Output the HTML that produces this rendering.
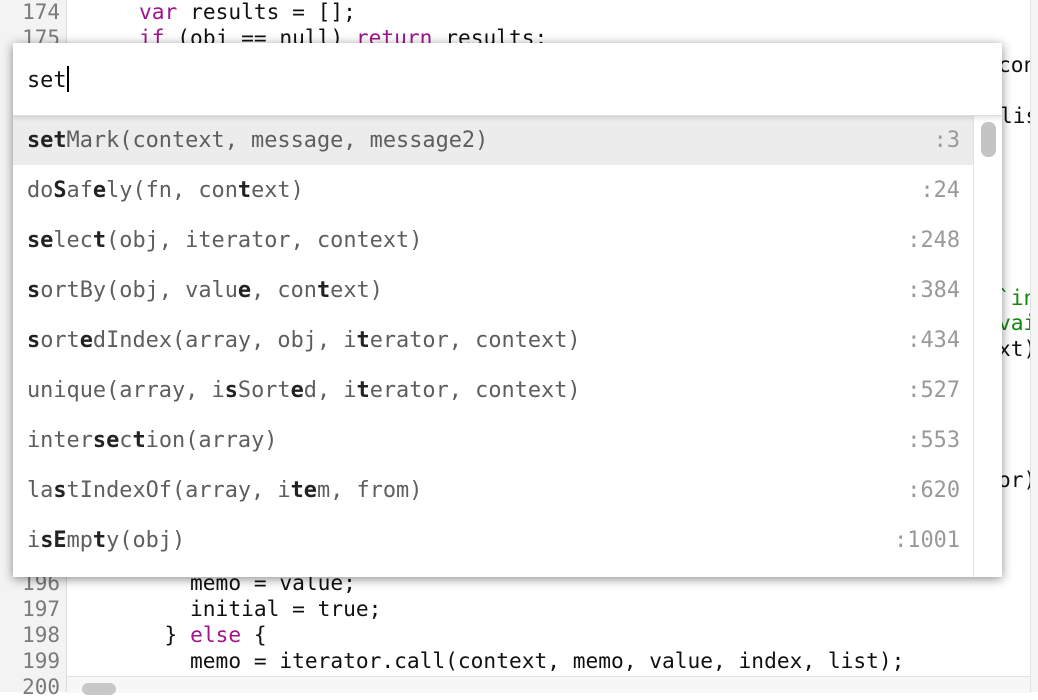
<!DOCTYPE html><html><head><style>
body{margin:0;width:1038px;height:692px;overflow:hidden;background:#fff;position:relative;font-family:"DejaVu Sans Mono","Liberation Mono",monospace}
.gut{position:absolute;left:0;top:0;width:66px;height:692px;background:#f3f3f3;border-right:1px solid #ddd}
.ln{position:absolute;left:0;width:66px;font-size:21px;color:#7a7a7a;line-height:26px}
.ln span{display:inline-block;width:60px;text-align:right}
.cd{position:absolute;left:88px;font-size:21.2px;color:#111;line-height:26px;white-space:pre}
.k{color:#a0148c}.g{color:#118811}
.rv{position:absolute;left:1030px;top:0;width:8px;height:692px;background:#f5f5f5;border-left:1px solid #e2e2e2}
.pop{position:absolute;left:13px;top:43px;width:989px;height:534px;background:#fff;box-shadow:0 2px 10px rgba(0,0,0,.45);overflow:hidden}
.inp{height:72px;border-bottom:1px solid #ddd;box-shadow:0 2px 5px rgba(0,0,0,.12);position:relative;z-index:2}
.inp div{position:absolute;left:14px;top:23px;font-size:21.9px;color:#111;white-space:pre}
.cur{display:inline-block;width:2px;height:26px;background:#000;vertical-align:-5px}
.row{position:absolute;left:0;width:960px;height:50px;font-size:21.9px;color:#5e5e5e;white-space:pre}
.row .t{position:absolute;left:14px;top:13px}
.row .n{position:absolute;right:13px;top:13px;color:#999}
.row b{color:#222}
.sb{position:absolute;left:960px;top:72px;width:29px;height:462px;border-left:1px solid #e3e3e3;background:#fff}
.th{position:absolute;left:7px;top:7px;width:15px;height:35px;border-radius:7px;background:#c4c4c4}
</style></head><body>
<div class="gut"></div>
<div class="ln" style="top:-1px"><span>174</span></div>
<div class="ln" style="top:25px"><span>175</span></div>
<div class="ln" style="top:570px"><span>196</span></div>
<div class="ln" style="top:596px"><span>197</span></div>
<div class="ln" style="top:622px"><span>198</span></div>
<div class="ln" style="top:648px"><span>199</span></div>
<div class="ln" style="top:674px"><span>200</span></div>
<div class="cd" style="top:-1px">    <span class="k">var</span> results = [];</div>
<div class="cd" style="top:25px">    <span class="k">if</span> (obj == null) <span class="k">return</span> results;</div>
<div class="cd" style="top:570px">        memo = value;</div>
<div class="cd" style="top:596px">        initial = true;</div>
<div class="cd" style="top:622px">      } <span class="k">else</span> {</div>
<div class="cd" style="top:648px">        memo = iterator.call(context, memo, value, index, list);</div>
<div class="cd" style="top:52px;left:998px">con</div>
<div class="cd" style="top:103px;left:1000px">lis</div>
<div class="cd g" style="top:285px;left:998px">`in</div>
<div class="cd g" style="top:310px;left:998px">vai</div>
<div class="cd" style="top:336px;left:998px">xt)</div>
<div class="cd" style="top:467px;left:998px">or)</div>
<div style="position:absolute;left:67px;top:676px;width:963px;height:16px;background:#f7f7f7;border-top:1px solid #e3e3e3"></div>
<div style="position:absolute;left:82px;top:683px;width:34px;height:12px;border-radius:6px;background:#c8c8c8"></div>
<div class="rv"></div>
<div class="pop">
<div class="inp"><div>set<span class="cur"></span></div></div>
<div class="row" style="top:72px;background:#ececec"><span class="t"><b>set</b>Mark(context, message, message2)</span><span class="n">:3</span></div>
<div class="row" style="top:122px"><span class="t">do<b>S</b>af<b>e</b>ly(fn, con<b>t</b>ext)</span><span class="n">:24</span></div>
<div class="row" style="top:172px"><span class="t"><b>se</b>lec<b>t</b>(obj, iterator, context)</span><span class="n">:248</span></div>
<div class="row" style="top:222px"><span class="t"><b>s</b>ortBy(obj, valu<b>e</b>, con<b>t</b>ext)</span><span class="n">:384</span></div>
<div class="row" style="top:272px"><span class="t"><b>s</b>ort<b>e</b>dIndex(array, obj, i<b>t</b>erator, context)</span><span class="n">:434</span></div>
<div class="row" style="top:322px"><span class="t">unique(array, i<b>s</b>Sort<b>e</b>d, i<b>t</b>erator, context)</span><span class="n">:527</span></div>
<div class="row" style="top:372px"><span class="t">inter<b>s</b><b>e</b>c<b>t</b>ion(array)</span><span class="n">:553</span></div>
<div class="row" style="top:422px"><span class="t">la<b>s</b>tIndexOf(array, i<b>t</b><b>e</b>m, from)</span><span class="n">:620</span></div>
<div class="row" style="top:472px"><span class="t">i<b>s</b><b>E</b>mp<b>t</b>y(obj)</span><span class="n">:1001</span></div>
<div class="sb"><div class="th"></div></div>
</div>
</body></html>
